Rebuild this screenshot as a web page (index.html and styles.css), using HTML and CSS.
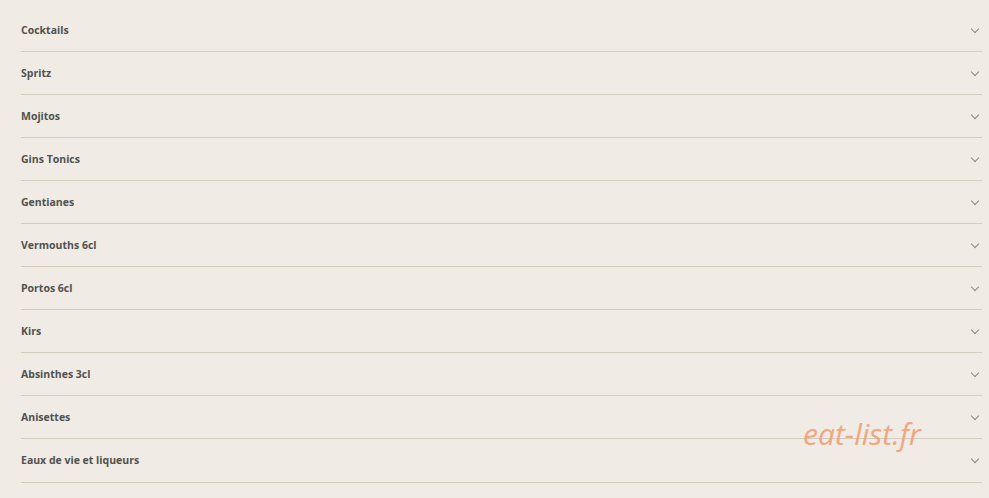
FILE: index.html
```html
<!doctype html>
<html lang="fr">
<head>
    <meta charset="UTF-8">
    <meta name="viewport" content="width=device-width, initial-scale=1.0">
    <title>Carte - Boissons</title>
    <link rel="stylesheet" href="styles.css">
</head>
<body>

<div class="menu-list">
    <div class="menu-item"><span class="menu-title">Cocktails</span><span class="chevron"></span></div>
    <div class="menu-item"><span class="menu-title">Spritz</span><span class="chevron"></span></div>
    <div class="menu-item"><span class="menu-title">Mojitos</span><span class="chevron"></span></div>
    <div class="menu-item"><span class="menu-title">Gins Tonics</span><span class="chevron"></span></div>
    <div class="menu-item"><span class="menu-title">Gentianes</span><span class="chevron"></span></div>
    <div class="menu-item"><span class="menu-title">Vermouths 6cl</span><span class="chevron"></span></div>
    <div class="menu-item"><span class="menu-title">Portos 6cl</span><span class="chevron"></span></div>
    <div class="menu-item"><span class="menu-title">Kirs</span><span class="chevron"></span></div>
    <div class="menu-item"><span class="menu-title">Absinthes 3cl</span><span class="chevron"></span></div>
    <div class="menu-item"><span class="menu-title">Anisettes</span><span class="chevron"></span></div>
    <div class="menu-item"><span class="menu-title">Eaux de vie et liqueurs</span><span class="chevron"></span></div>
</div>

<div class="watermark">eat-list.fr</div>

</body>
</html>
```

FILE: styles.css
```css
html, body {
    margin: 0;
    background: #f0ebe4;
}

body {
    padding: 9px 7px 0 21px;
    font-family: "Open Sans", sans-serif;
    overflow: hidden;
    height: 498px;
    box-sizing: border-box;
}

.menu-item {
    display: flex;
    align-items: center;
    justify-content: space-between;
    height: 42.05px;
    border-bottom: 1px solid #d3ccbf;
}

.menu-title {
    font-size: 10.5px;
    font-weight: 700;
    color: #50524f;
}

.chevron {
    width: 5px;
    height: 5px;
    margin-right: 4px;
    margin-top: -3px;
    border-right: 1px solid #8c8a86;
    border-bottom: 1px solid #8c8a86;
    transform: rotate(45deg);
}

.watermark {
    position: absolute;
    left: 803px;
    top: 413px;
    font-family: "Open Sans", sans-serif;
    font-style: italic;
    font-size: 30px;
    color: #eea57c;
    opacity: 0.95;
}
```
